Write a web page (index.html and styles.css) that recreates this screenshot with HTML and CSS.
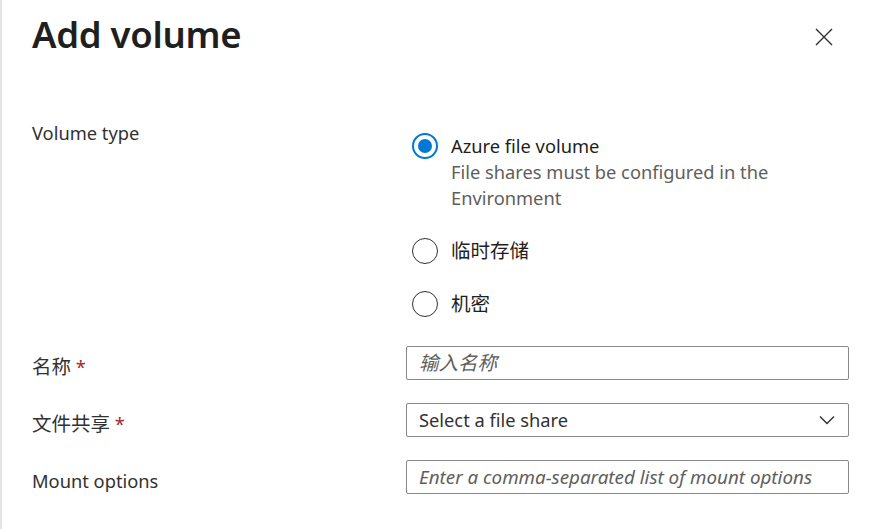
FILE: index.html
```html
<!DOCTYPE html>
<html lang="zh">
<head>
<meta charset="utf-8">
<title>Add volume</title>
<link rel="stylesheet" href="styles.css">
</head>
<body>
<div class="panel">
  <header class="head">
    <h1 class="title">Add volume</h1>
    <button class="close" aria-label="Close">
      <svg width="18" height="18" viewBox="0 0 18 18"><path d="M1 1L17 17M17 1L1 17" stroke="#323130" stroke-width="1.4" fill="none"/></svg>
    </button>
  </header>
  <div class="form">
    <div class="label label-top">Volume type</div>
    <div class="radios">
      <div class="option">
        <span class="radio checked"></span>
        <div class="opt-text">
          <div class="opt-title">Azure file volume</div>
          <div class="opt-desc">File shares must be configured in the Environment</div>
        </div>
      </div>
      <div class="option">
        <span class="radio"></span>
        <div class="opt-text"><div class="opt-title cjk">临时存储</div></div>
      </div>
      <div class="option">
        <span class="radio"></span>
        <div class="opt-text"><div class="opt-title cjk">机密</div></div>
      </div>
    </div>

    <div class="label"><span class="cjk">名称</span> <span class="req">*</span></div>
    <div class="field"><div class="input placeholder cjk">输入名称</div></div>

    <div class="label"><span class="cjk">文件共享</span> <span class="req">*</span></div>
    <div class="field">
      <div class="input select">
        <span>Select a file share</span>
        <svg width="16" height="10" viewBox="0 0 16 10"><path d="M1 1.5L8 8.5L15 1.5" stroke="#323130" stroke-width="1.4" fill="none"/></svg>
      </div>
    </div>

    <div class="label">Mount options</div>
    <div class="field"><div class="input placeholder">Enter a comma-separated list of mount options</div></div>
  </div>
</div>
</body>
</html>
```
FILE: styles.css
```css
* { box-sizing: border-box; }
html, body { margin: 0; padding: 0; background: #fff; }
body {
  font-family: "Noto Sans", "Noto Sans CJK SC", sans-serif;
  color: #323130;
  font-size: 18.3px;
}
.panel {
  width: 878px;
  height: 529px;
  border-left: 2px solid #e3e3e3;
  padding-left: 30px;
  overflow: hidden;
}
.head {
  display: flex;
  justify-content: space-between;
  align-items: flex-start;
  padding-top: 10px;
  padding-right: 45px;
}
.title {
  margin: 0;
  font-size: 36.5px;
  font-weight: 600;
  line-height: 48px;
  letter-spacing: -0.3px;
  color: #201f1e;
}
.close {
  border: 0;
  background: none;
  padding: 0;
  margin-top: 18px;
  width: 18px;
  height: 18px;
  display: flex;
}
.form {
  display: grid;
  grid-template-columns: 374px 443px;
  row-gap: 23px;
  padding-top: 62px;
}
.label {
  line-height: 26px;
  height: 34px;
  padding-top: 8px;
}
.label-top { padding-top: 0; }
.cjk { font-size: 19.5px; }
.req { color: #a4262c; }
.radios {
  display: flex;
  flex-direction: column;
  gap: 27px;
  padding: 13px 0 6px 6px;
}
.option {
  display: flex;
  align-items: flex-start;
  gap: 13px;
}
.radio {
  flex: none;
  width: 26px;
  height: 26px;
  border-radius: 50%;
  border: 1.5px solid #323130;
  display: flex;
  align-items: center;
  justify-content: center;
}
.radio.checked { border: 2px solid #0078d4; }
.radio.checked::after {
  content: "";
  width: 14px;
  height: 14px;
  border-radius: 50%;
  background: #0078d4;
}
.opt-text { line-height: 26px; }
.opt-title { color: #201f1e; }
.opt-desc { color: #605e5c; width: 360px; }
.input {
  height: 34px;
  border: 1px solid #8a8886;
  border-radius: 2px;
  padding: 0 12px;
  display: flex;
  align-items: center;
  line-height: 26px;
  color: #323130;
}
.placeholder { font-style: italic; color: #605e5c; font-size: 18.8px; }
.placeholder.cjk { font-size: 19.5px; }
.select { justify-content: space-between; padding-right: 13px; }
```
